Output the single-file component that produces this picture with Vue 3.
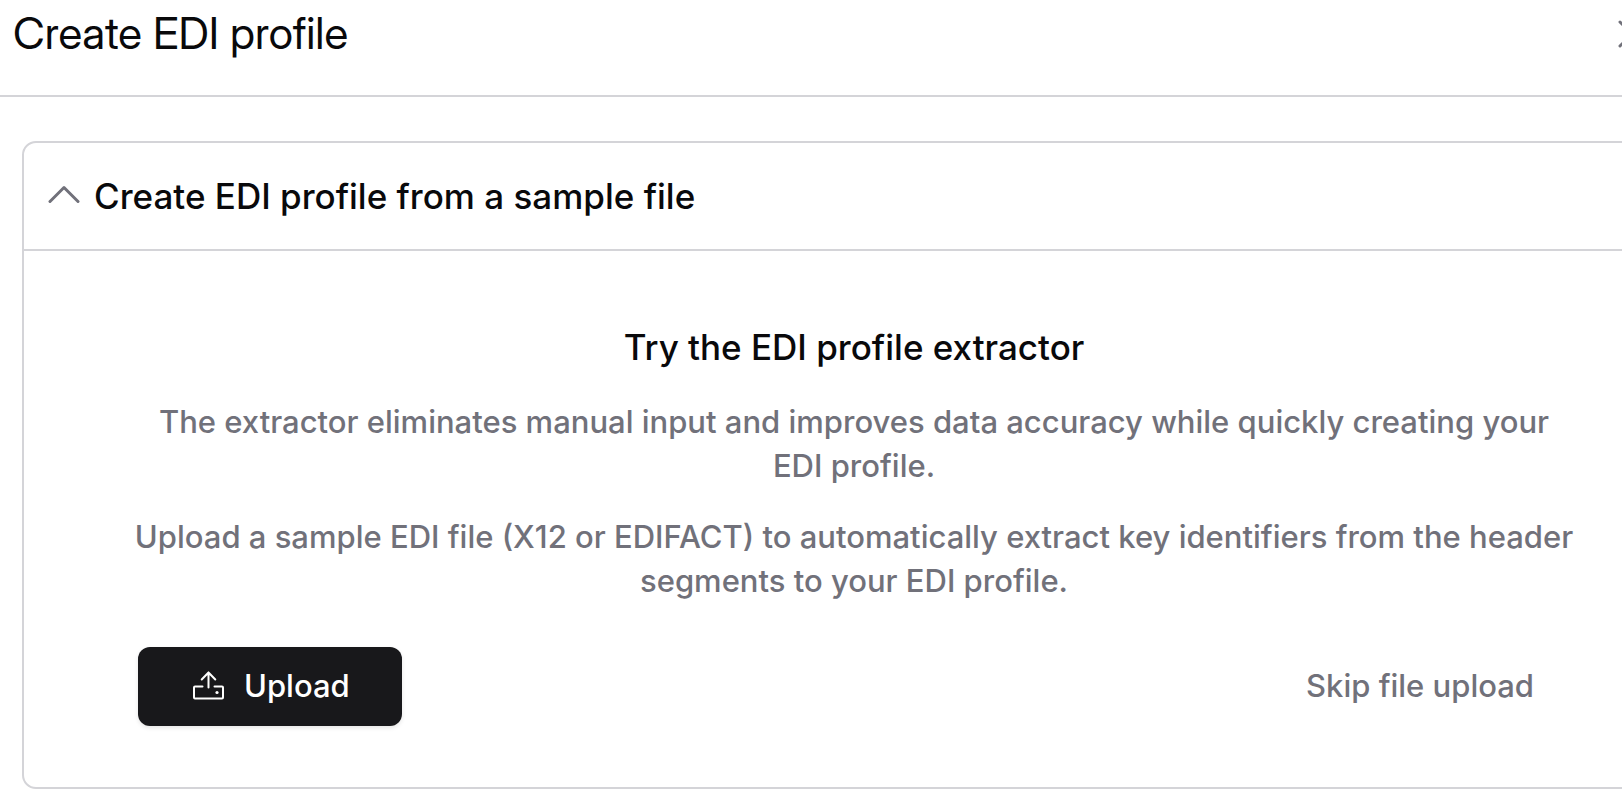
<script setup>
import { ref } from 'vue'

const open = ref(true)
</script>

<template>
  <main class="drawer">
    <header class="drawer-header">
      <h1>Create EDI profile</h1>
      <button class="close" type="button" aria-label="Close">
        <svg viewBox="0 0 28 28" aria-hidden="true">
          <path d="M2 2 26 26M26 2 2 26" />
        </svg>
      </button>
    </header>

    <section class="card">
      <h2 class="card-title">
        <button class="toggle" type="button" :aria-expanded="open" @click="open = !open">
          <svg class="chevron" :class="{ closed: !open }" viewBox="0 0 32 32" aria-hidden="true">
            <path d="M2 21.5 16 7.5 30 21.5" />
          </svg>
          <span>Create EDI profile from a sample file</span>
        </button>
      </h2>
      <div v-if="open" class="card-body">
        <h3>Try the EDI profile extractor</h3>
        <div class="description">
          <p>
            The extractor eliminates manual input and improves data accuracy while quickly creating
            your EDI profile.
          </p>
          <p>
            Upload a sample EDI file (X12 or EDIFACT) to automatically extract key identifiers from
            the header segments to your EDI profile.
          </p>
        </div>
        <div class="actions">
          <button class="upload" type="button">
            <svg viewBox="0 0 32 32" aria-hidden="true">
              <path d="M10.5 16.5H3Q2 16.5 2 17.5V27.5Q2 28.500 3 28.500H30Q31 28.500 31 27.500V17.500Q31 16.500 30 16.500H22.5" />
              <path d="M16.5 17.5V2.500M9.700 9.500 16.500 2.500 23.300 9.500" />
              <circle cx="25" cy="22.500" r="1.600" />
            </svg>
            <span>Upload</span>
          </button>
          <button class="skip" type="button">Skip file upload</button>
        </div>
      </div>
    </section>
  </main>
</template>

<style>
body {
  background: #fff;
}
</style>

<style scoped>
.drawer {
  min-height: 100vh;
  overflow: hidden;
  box-sizing: border-box;
  font-family: Inter, "Liberation Sans", sans-serif;
  color: #09090b;
}

h1,
h2,
h3,
p {
  margin: 0;
}

button {
  font: inherit;
  border: 0;
  background: none;
  cursor: pointer;
}

svg {
  flex: none;
  fill: none;
  stroke: currentColor;
  stroke-linecap: round;
  stroke-linejoin: round;
}

.drawer-header {
  display: flex;
  align-items: center;
  justify-content: space-between;
  margin-right: -64px;
  padding: 4px 40px 32px 13px;
  border-bottom: 2px solid #d4d4d8;
}

h1 {
  font-family: "Inter Display", Inter, "Liberation Sans", sans-serif;
  font-size: 44px;
  line-height: 59px;
  font-weight: 400;
}

.close {
  display: flex;
  padding: 0;
  color: #71717a;
}

.close svg {
  width: 28px;
  height: 28px;
  stroke-width: 3;
}

.card {
  margin: 44px -64px 0 22px;
  border: 2px solid #d4d4d8;
  border-radius: 14px;
}

.card-title {
  font-size: 35px;
  line-height: 48px;
  font-weight: 500;
}

.toggle {
  display: flex;
  align-items: center;
  gap: 14px;
  width: 100%;
  padding: 29px 24px;
  border-bottom: 2px solid #d4d4d8;
  color: inherit;
  text-align: left;
}

.chevron {
  width: 32px;
  height: 32px;
  color: #71717a;
  stroke-width: 3;
}

.chevron.closed {
  transform: rotate(180deg);
}

.card-body {
  padding: 72px 110px 61px;
  text-align: center;
}

h3 {
  font-size: 35px;
  line-height: 48px;
  font-weight: 500;
}

.description {
  display: grid;
  gap: 27px;
  margin-top: 29px;
  font-size: 31px;
  line-height: 44px;
  font-weight: 500;
  color: #71717a;
}

.actions {
  display: flex;
  align-items: center;
  justify-content: space-between;
  margin-top: 44px;
  padding: 0 4px;
  font-size: 31px;
  line-height: 44px;
  font-weight: 500;
}

.upload {
  display: flex;
  align-items: center;
  gap: 20px;
  padding: 17px 52px 18px 54px;
  border-radius: 12px;
  background: #18181b;
  color: #fff;
  box-shadow: 0 2px 4px rgba(0, 0, 0, 0.1);
}

.upload svg {
  width: 32px;
  height: 32px;
  stroke-width: 2;
}

.upload circle {
  fill: currentColor;
  stroke: none;
}

.skip {
  padding: 17px 36px 18px;
  color: #71717a;
}
</style>
